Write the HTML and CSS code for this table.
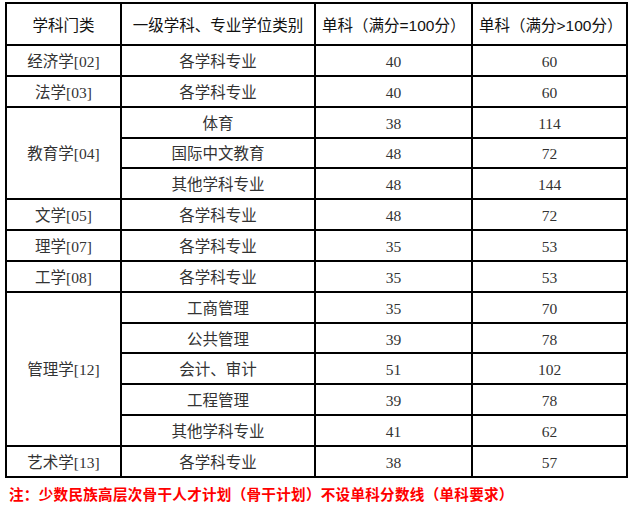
FILE: index.html
```html
<!DOCTYPE html>
<html lang="zh-CN">
<head>
<meta charset="utf-8">
<link rel="stylesheet" href="styles.css">
</head>
<body>
<div class="page">
  <table class="score-table">
    <colgroup>
      <col class="c1"><col class="c2"><col class="c3"><col class="c4">
    </colgroup>
    <thead>
      <tr class="head-row">
        <th>学科门类</th>
        <th>一级学科、专业学位类别</th>
        <th class="left">单科（满分=100分）</th>
        <th class="left">单科（满分&gt;100分）</th>
      </tr>
    </thead>
    <tbody>
      <tr><td>经济学[02]</td><td>各学科专业</td><td>40</td><td>60</td></tr>
      <tr><td>法学[03]</td><td>各学科专业</td><td>40</td><td>60</td></tr>
      <tr><td rowspan="3">教育学[04]</td><td>体育</td><td>38</td><td>114</td></tr>
      <tr><td>国际中文教育</td><td>48</td><td>72</td></tr>
      <tr><td>其他学科专业</td><td>48</td><td>144</td></tr>
      <tr><td>文学[05]</td><td>各学科专业</td><td>48</td><td>72</td></tr>
      <tr><td>理学[07]</td><td>各学科专业</td><td>35</td><td>53</td></tr>
      <tr><td>工学[08]</td><td>各学科专业</td><td>35</td><td>53</td></tr>
      <tr><td rowspan="5">管理学[12]</td><td>工商管理</td><td>35</td><td>70</td></tr>
      <tr><td>公共管理</td><td>39</td><td>78</td></tr>
      <tr><td>会计、审计</td><td>51</td><td>102</td></tr>
      <tr><td>工程管理</td><td>39</td><td>78</td></tr>
      <tr><td>其他学科专业</td><td>41</td><td>62</td></tr>
      <tr><td>艺术学[13]</td><td>各学科专业</td><td>38</td><td>57</td></tr>
    </tbody>
  </table>
  <p class="note">注：少数民族高层次骨干人才计划（骨干计划）不设单科分数线（单科要求）</p>
</div>
</body>
</html>
```
FILE: styles.css
```css
html, body {
  margin: 0;
  padding: 0;
  background: #fff;
}
.page {
  padding: 2px 0 0 5px;
}
.score-table {
  border-collapse: collapse;
  table-layout: fixed;
  width: 621px;
  border: 2px solid #000;
}
.c1 { width: 115px; }
.c2 { width: 194px; }
.c3 { width: 157px; }
.c4 { width: 155px; }
.score-table th,
.score-table td {
  border: 2px solid #000;
  padding: 0;
  text-align: center;
  vertical-align: middle;
}
.score-table th {
  font-family: "Liberation Sans", "Noto Sans CJK SC", sans-serif;
  font-weight: 400;
  font-size: 15.5px;
  color: #111;
}
.score-table th.left {
  text-align: left;
  padding-left: 6px;
}
.head-row {
  height: 42px;
}
.score-table tbody tr {
  height: 30.85px;
}
.score-table td {
  font-family: "Liberation Serif", "Noto Sans CJK SC", serif;
  font-size: 15.5px;
  color: #333;
  line-height: 20px;
  padding-top: 3px;
}
.note {
  margin: 6px 0 0 4px;
  font-family: "Noto Sans CJK SC", sans-serif;
  font-weight: 600;
  font-size: 14.6px;
  letter-spacing: 0.25px;
  line-height: 20px;
  color: #f00;
}
```
